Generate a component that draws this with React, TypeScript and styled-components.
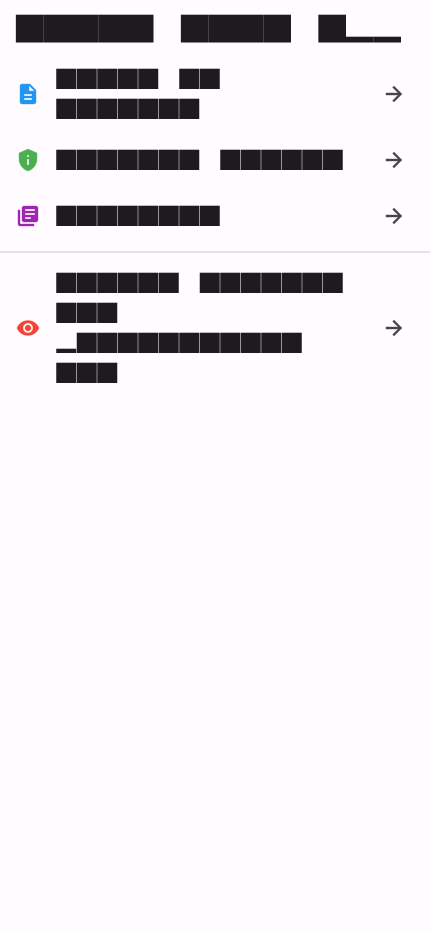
import React from "react";
import styled, { createGlobalStyle } from "styled-components";
import type { IconType } from "react-icons";
import {
  MdArrowForward,
  MdDescription,
  MdLibraryBooks,
  MdPrivacyTip,
  MdRemoveRedEye,
} from "react-icons/md";

const GlobalStyle = createGlobalStyle`
  body {
    margin: 0;
    background: #fffbff;
    font-family: Roboto, sans-serif;
  }
`;

const Screen = styled.main`
  min-height: 932px;
  background: #fffbff;
`;

const AppBar = styled.header`
  height: 56px;
  padding: 0 16px 0 15px;
  box-sizing: border-box;
`;

const Item = styled.div`
  display: flex;
  align-items: center;
  gap: 16px;
  min-height: 56px;
  padding: 8px 24px 8px 16px;
  box-sizing: border-box;
`;

const IconSlot = styled.span<{ $color: string; $weight: number }>`
  display: flex;
  font-size: 24px;
  color: ${(p) => p.$color};

  path {
    stroke-width: ${(p) => p.$weight}px;
    stroke-linejoin: round;
  }

  path[fill="none"] {
    stroke: none;
  }
`;

const Label = styled.div`
  display: flex;
  flex: 1;
  flex-direction: column;
`;

const Divider = styled.hr`
  height: 2px;
  margin: 7px 0;
  border: 0;
  background: #e6e0e9;
`;

const Glyphs = styled.svg`
  display: block;
  fill: #1d1b20;
`;

interface Face {
  size: number;
  advance: number;
  left: number;
  top: number;
  bottom: number;
  short: number;
  line: number;
}

const titleFace: Face = { size: 27.65, advance: 27.5, left: 0.85, top: 14.7, bottom: 42.5, short: 36.7, line: 56 };
const bodyFace: Face = { size: 20, advance: 20.5, left: 0.25, top: 4.72, bottom: 25, short: 20.72, line: 30 };

// "#" is a full block, "_" a low block and a space an empty cell.
function BlockLine({ cells, face }: { cells: string; face: Face }) {
  return (
    <Glyphs width={Math.ceil(cells.length * face.advance) + 2} height={face.line}>
      {[...cells].map((cell, i) => {
        if (cell === " ") return null;
        const top = cell === "_" ? face.short : face.top;
        return (
          <rect
            key={i}
            x={face.left + i * face.advance}
            y={top}
            width={face.size}
            height={face.bottom - top}
          />
        );
      })}
    </Glyphs>
  );
}

interface Entry {
  icon: IconType;
  color: string;
  lines: string[];
}

const documents: Entry[] = [
  { icon: MdDescription, color: "#2196f3", lines: ["##### ##", "#######"] },
  { icon: MdPrivacyTip, color: "#4caf50", lines: ["####### ######"] },
  { icon: MdLibraryBooks, color: "#9c27b0", lines: ["########"] },
];

const visibility: Entry = {
  icon: MdRemoveRedEye,
  color: "#f44336",
  lines: ["###### #######", "###", "_###########", "###"],
};

function EntryRow({ entry }: { entry: Entry }) {
  const Icon = entry.icon;
  return (
    <Item>
      <IconSlot $color={entry.color} $weight={0.35}>
        <Icon />
      </IconSlot>
      <Label>
        {entry.lines.map((line, i) => (
          <BlockLine key={i} cells={line} face={bodyFace} />
        ))}
      </Label>
      <IconSlot $color="#49454f" $weight={0.4}>
        <MdArrowForward />
      </IconSlot>
    </Item>
  );
}

export default function App() {
  return (
    <>
      <GlobalStyle />
      <Screen>
        <AppBar>
          <BlockLine cells="##### #### #__" face={titleFace} />
        </AppBar>
        {documents.map((entry, i) => (
          <EntryRow key={i} entry={entry} />
        ))}
        <Divider />
        <EntryRow entry={visibility} />
      </Screen>
    </>
  );
}
